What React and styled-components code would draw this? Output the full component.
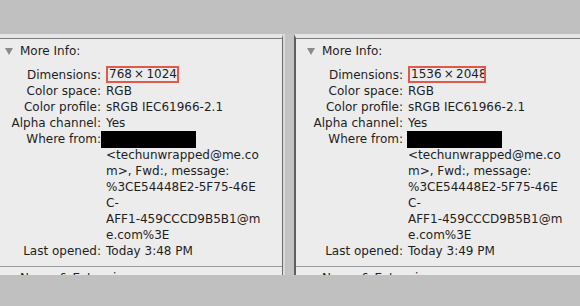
import styled, { createGlobalStyle } from "styled-components";

const GlobalStyle = createGlobalStyle`
    html, body {
        margin: 0;
        padding: 0;
        background: #c0c0c0;
    }
    body {
        font-family: "DejaVu Sans", "Liberation Sans", sans-serif;
    }
`

const panelList = [
    { dims: "768 × 1024", boxWidth: 73, opened: "Today 3:48 PM", inset: 0, nudge: -5 },
    { dims: "1536 × 2048", boxWidth: 78, opened: "Today 3:49 PM", inset: 6, nudge: -1 },
]

const whereFrom = [
    "<techunwrapped@me.co",
    "m>, Fwd:, message:",
    "%3CE54448E2-5F75-46E",
    "C-",
    "AFF1-459CCCD9B5B1@m",
    "e.com%3E",
]

function InfoPanel({ panel, side }) {
    return (
        <Panel side={side}>
            <Body>
                <SectionHeader inset={panel.inset}>
                    <Arrow /> More Info:
                </SectionHeader>
                <InfoGrid inset={panel.inset}>
                    <Label>Dimensions:</Label>
                    <Value>
                        <Highlight boxWidth={panel.boxWidth}>{panel.dims}</Highlight>
                    </Value>
                    <Label>Color space:</Label>
                    <Value>RGB</Value>
                    <Label>Color profile:</Label>
                    <Value>sRGB IEC61966-2.1</Value>
                    <Label>Alpha channel:</Label>
                    <Value>Yes</Value>
                    <Label>Where from:</Label>
                    <Value>
                        <Redacted nudge={panel.nudge} />
                        {whereFrom.map((line, index) => (
                            <Line key={index}>{line}</Line>
                        ))}
                    </Value>
                    <Label>Last opened:</Label>
                    <Value>{panel.opened}</Value>
                </InfoGrid>
                <Separator />
                <SectionHeader inset={panel.inset} collapsed>
                    <Arrow /> Name &amp; Extension:
                </SectionHeader>
            </Body>
        </Panel>
    )
}

export default function App() {
    return (
        <>
            <GlobalStyle />
            <Page>
                <TopBand />
                <Main>
                    <InfoPanel panel={panelList[0]} side="left" />
                    <Gutter />
                    <InfoPanel panel={panelList[1]} side="right" />
                </Main>
            </Page>
        </>
    )
}

const Page = styled.div`
    width: 580px;
    height: 306px;
    display: flex;
    flex-direction: column;
    background: #c0c0c0;
    overflow: hidden;
`

const TopBand = styled.div`
    height: 34px;
    flex: 0 0 34px;
`

const Main = styled.div`
    display: flex;
    height: 241px;
`

const Panel = styled.div`
    flex: ${p => p.side === "left" ? "0 0 283px" : "1 1 auto"};
    box-sizing: border-box;
    display: flex;
    flex-direction: column;
    border-top: 4px solid #e6e6e6;
    border-right: ${p => p.side === "left" ? "1px solid #6c6c6c" : "none"};
    border-left: ${p => p.side === "right" ? "2px solid #5e5e5e" : "none"};
    background: #ececec;
    min-width: 0;
`

const Gutter = styled.div`
    flex: 0 0 9px;
    border-left: 2px solid #dadada;
    background: #c3c3c3;
`

const Body = styled.div`
    flex: 1;
    border-top: 1px solid #7c7c7c;
    padding-top: 4px;
    overflow: hidden;
    color: #1e1e1e;
    font-size: 12px;
    line-height: 16px;
`

const SectionHeader = styled.div`
    display: flex;
    align-items: center;
    gap: 7px;
    padding-left: ${p => p.inset + 5}px;
    padding-top: ${p => p.collapsed ? "3px" : "0"};
    white-space: nowrap;
`

const Arrow = styled.span`
    width: 0;
    height: 0;
    border-left: 4px solid transparent;
    border-right: 4px solid transparent;
    border-top: 7px solid #8a8a8a;
`

const InfoGrid = styled.div`
    display: grid;
    grid-template-columns: ${p => p.inset + 101}px 1fr;
    column-gap: 5px;
    margin-top: 8px;
`

const Label = styled.div`
    text-align: right;
    white-space: nowrap;
`

const Value = styled.div`
    white-space: nowrap;
`

const Line = styled.div``

const Highlight = styled.span`
    display: inline-block;
    box-sizing: border-box;
    width: ${p => p.boxWidth}px;
    height: 17px;
    margin-top: -1px;
    padding-left: 1px;
    border: 2px solid #e05a4c;
    line-height: 13px;
    word-spacing: -1.6px;
    overflow: hidden;
    white-space: nowrap;
    vertical-align: top;
`

const Redacted = styled.div`
    width: 95px;
    height: 17px;
    margin-left: ${p => p.nudge}px;
    margin-bottom: -1px;
    background: #000;
`

const Separator = styled.div`
    height: 1px;
    margin-top: 7px;
    background: #9a9a9a;
`
